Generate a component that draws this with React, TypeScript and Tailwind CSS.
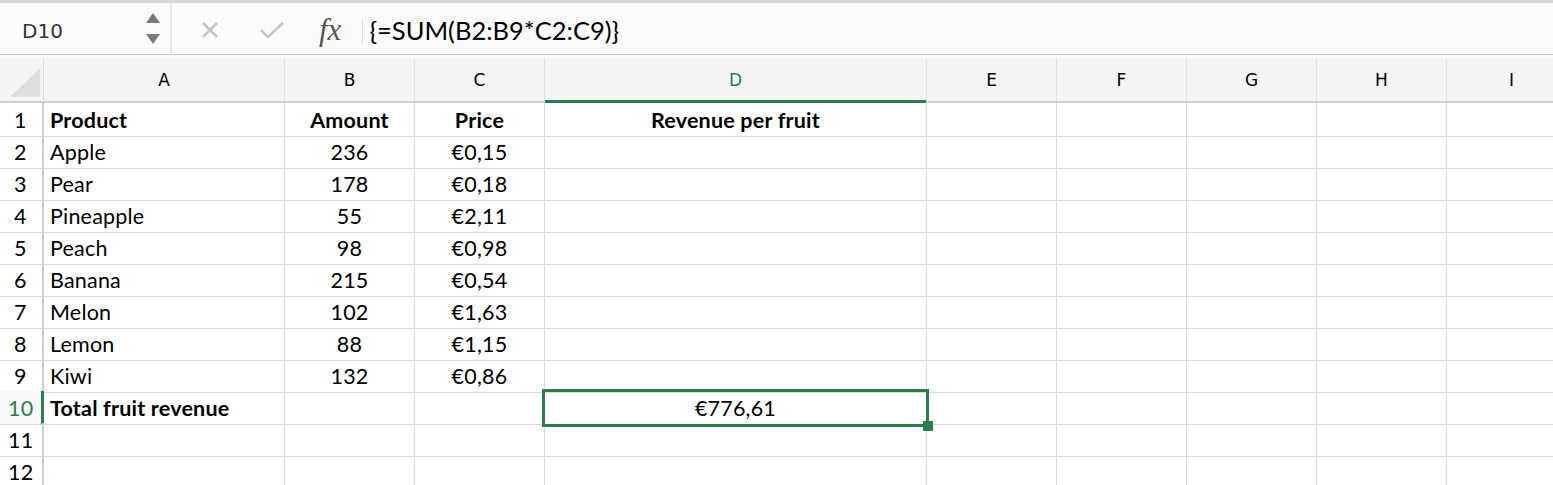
import React from "react";

const cols = ["A", "B", "C", "D", "E", "F", "G", "H", "I"];

const rows: { n: number; a?: string; b?: string; c?: string; d?: string; bold?: boolean; total?: boolean }[] = [
  { n: 1, a: "Product", b: "Amount", c: "Price", d: "Revenue per fruit", bold: true },
  { n: 2, a: "Apple", b: "236", c: "€0,15" },
  { n: 3, a: "Pear", b: "178", c: "€0,18" },
  { n: 4, a: "Pineapple", b: "55", c: "€2,11" },
  { n: 5, a: "Peach", b: "98", c: "€0,98" },
  { n: 6, a: "Banana", b: "215", c: "€0,54" },
  { n: 7, a: "Melon", b: "102", c: "€1,63" },
  { n: 8, a: "Lemon", b: "88", c: "€1,15" },
  { n: 9, a: "Kiwi", b: "132", c: "€0,86" },
  { n: 10, a: "Total fruit revenue", d: "€776,61", total: true },
  { n: 11 },
  { n: 12 },
];

const gridCols =
  "grid grid-cols-[44px_241px_130px_130px_382px_130px_130px_130px_130px_130px]";

const FormulaBar = () => (
  <div className="flex h-[52px] items-center border-b border-[#c9c9c9] bg-[#fbfbfb]">
    <div className="flex h-full w-[172px] items-center border-r-2 border-[#e4e4e4] pl-[22px] pr-[10px]">
      <span className="mt-[4px] font-['DejaVu_Sans',sans-serif] text-[20px] text-[#333]">D10</span>
      <div className="ml-auto flex flex-col gap-[11px]">
        <svg width="14" height="10" viewBox="0 0 14 10">
          <polygon points="7,0 14,10 0,10" fill="#7b7b7b" />
        </svg>
        <svg width="14" height="10" viewBox="0 0 14 10">
          <polygon points="0,0 14,0 7,10" fill="#7b7b7b" />
        </svg>
      </div>
    </div>
    <svg className="ml-[29px] mt-[3px]" width="18" height="18" viewBox="0 0 18 18">
      <path d="M2 2 L16 16 M16 2 L2 16" stroke="#c6c6c6" strokeWidth="2.6" />
    </svg>
    <svg className="ml-[40px] mt-[2px]" width="26" height="20" viewBox="0 0 26 20">
      <path d="M2 10 L9 17 L24 3" stroke="#c6c6c6" strokeWidth="2.6" fill="none" />
    </svg>
    <span className="ml-[34px] mt-[2px] font-['Liberation_Serif',serif] text-[31px] italic leading-none text-[#555]">
      fx
    </span>
    <div className="ml-[21px] mt-[4px] h-[26px] w-px bg-[#dcdcdc]" />
    <span className="ml-[6px] mt-[4px] font-['Lato',sans-serif] text-[25.5px] leading-none text-black">
      {"{=SUM(B2:B9*C2:C9)}"}
    </span>
  </div>
);

const HeaderRow = () => (
  <div className={`${gridCols} h-[45px] border-b-2 border-[#cdcdcd] bg-[#f4f4f4]`}>
    <div className="relative border-r border-[#dcdcdc]">
      <svg className="absolute left-[10px] top-[10px]" width="30" height="29" viewBox="0 0 30 29">
        <polygon points="30,0 30,29 0,29" fill="#dedede" />
      </svg>
    </div>
    {cols.map((c) => (
      <div
        key={c}
        className={`relative flex items-center justify-center border-r border-[#e2e2e2] pt-[2px] font-['DejaVu_Sans',sans-serif] text-[17px] ${
          c === "D" ? "text-[#2b7d4f]" : "text-black"
        }`}
      >
        {c}
        {c === "D" && <div className="absolute bottom-[-2px] left-0 right-0 h-[3px] bg-[#2b7d4f]" />}
      </div>
    ))}
  </div>
);

const Cell = ({
  children,
  align = "center",
  bold,
  className = "",
}: {
  children?: React.ReactNode;
  align?: "left" | "center";
  bold?: boolean;
  className?: string;
}) => (
  <div
    className={`flex items-center border-r border-b border-[#dadada] pt-[1px] ${
      align === "left" ? "justify-start pl-[6px]" : "justify-center"
    } ${bold ? "font-bold" : ""} ${className}`}
  >
    {children}
  </div>
);

export default function App() {
  return (
    <div className="h-[485px] w-[1553px] overflow-hidden bg-white">
      <div className="h-[3px] bg-[#d8d8d8]" />
      <FormulaBar />
      <div className="h-[3px] bg-[#fafafa]" />
      <HeaderRow />
      <div className="font-['Lato',sans-serif] text-[21.5px] tracking-[0.2px] text-black">
        {rows.map((r) => (
          <div key={r.n} className={`${gridCols} h-[32px]`}>
            <div
              className={`flex items-center border-b border-[#dadada] pt-[1px] ${
                r.total
                  ? "border-r-[3px] border-r-[#2b7d4f] bg-[#f7f7f7] pl-[8px] text-[#2b7d4f]"
                  : "border-r-2 border-r-[#cfcfcf]"
              } ${r.n >= 10 ? "pl-[8px]" : "pl-[14px]"}`}
            >
              {r.n}
            </div>
            <Cell align="left" bold={r.bold || r.total}>
              {r.a}
            </Cell>
            <Cell bold={r.bold}>{r.b}</Cell>
            <Cell bold={r.bold}>{r.c}</Cell>
            <Cell bold={r.bold} className="relative">
              {r.d}
              {r.total && (
                <div className="absolute left-[-3px] right-[-3px] top-[-2px] bottom-[-3px] z-10 border-[3px] border-[#2b7d4f]">
                  <div className="absolute bottom-[-7px] right-[-7px] h-[10px] w-[10px] bg-[#2b7d4f]" />
                </div>
              )}
            </Cell>
            {["E", "F", "G", "H", "I"].map((c) => (
              <Cell key={c} />
            ))}
          </div>
        ))}
      </div>
    </div>
  );
}
